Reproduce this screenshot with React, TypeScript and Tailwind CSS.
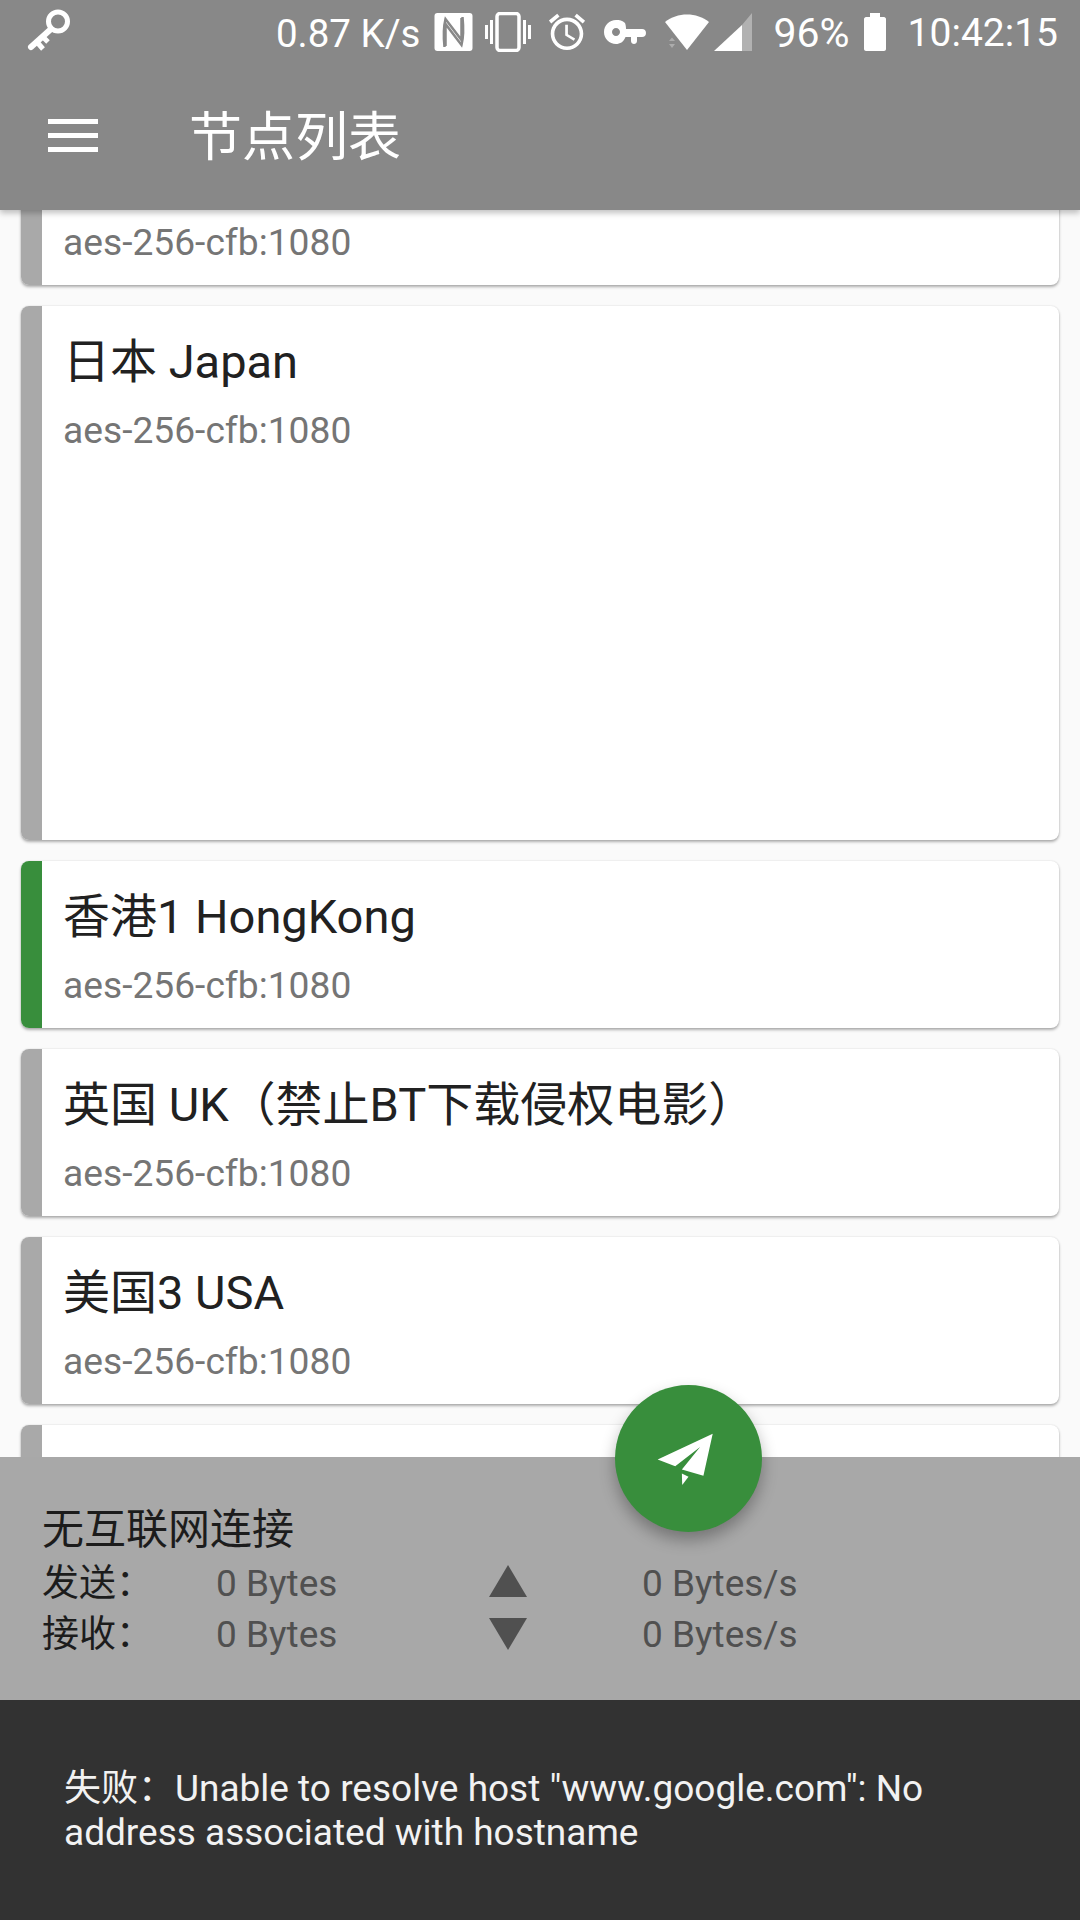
const font = "font-['Roboto','Noto_Sans_CJK_SC',sans-serif]";

function KeyIcon() {
  return (
    <svg width="44" height="46" viewBox="26 9 44 46" fill="none" className="text-white">
      <circle cx="58" cy="21.5" r="9.5" stroke="currentColor" strokeWidth="5" />
      <path d="M51 29 L31 47" stroke="currentColor" strokeWidth="6" strokeLinecap="round" />
      <path d="M37 42 L43 49 M43 37 L48 42" stroke="currentColor" strokeWidth="5" />
    </svg>
  );
}

function NfcIcon() {
  return (
    <svg width="39" height="38" viewBox="0 0 38 38">
      <rect width="38" height="38" rx="3" fill="white" />
      <path d="M10 34 C9 24 9 14 11 6 L27 27 V5" stroke="#888888" strokeWidth="2.5" fill="none" />
      <path d="M28 4 C29 14 29 24 27 32 L11 11 V33" stroke="#888888" strokeWidth="2.5" fill="none" />
    </svg>
  );
}

function VibrateIcon() {
  return (
    <svg width="46" height="40" viewBox="0 0 46 40" fill="white">
      <rect x="0" y="13" width="3" height="14" />
      <rect x="5" y="8" width="3" height="24" />
      <rect x="38" y="8" width="3" height="24" />
      <rect x="43" y="13" width="3" height="14" />
      <rect x="12" y="1.5" width="22" height="37" rx="3" fill="none" stroke="white" strokeWidth="3.5" />
    </svg>
  );
}

function AlarmIcon() {
  return (
    <svg width="38" height="38" viewBox="2 1.5 20 21" fill="white">
      <path d="M22 5.72l-4.6-3.86-1.29 1.53 4.6 3.86L22 5.72zM7.88 3.39L6.6 1.86 2 5.71l1.29 1.53 4.59-3.85zM12.5 8H11v6l4.75 2.85.75-1.23-4-2.37V8zM12 4c-4.97 0-9 4.03-9 9s4.02 9 9 9c4.97 0 9-4.03 9-9s-4.03-9-9-9zm0 16c-3.87 0-7-3.13-7-7s3.13-7 7-7 7 3.13 7 7-3.13 7-7 7z" />
    </svg>
  );
}

function VpnKeyIcon() {
  return (
    <svg width="42" height="24" viewBox="0 0 42 24" fill="white">
      <path d="M21 3 C18.5 0.5 15.5 0 12 0 C5.4 0 0 5.4 0 12 C0 18.6 5.4 24 12 24 C16 24 19.5 22 21.5 17 L27 17 L27 21 C27 23 28.5 24 30 24 C31.5 24 33 23 33 21 L33 17 L38 17 C40.5 17 42 15.5 42 13 C42 10.5 40.5 9 38 9 L22 9 C22 7 21.8 5 21 3 Z M12 8 C14.2 8 16 9.8 16 12 C16 14.2 14.2 16 12 16 C9.8 16 8 14.2 8 12 C8 9.8 9.8 8 12 8 Z" />
    </svg>
  );
}

function WifiIcon() {
  return (
    <svg width="48" height="38" viewBox="0 0 48 38" fill="white">
      <path d="M23 37 L1 9 C13 -1 33 -1 45 9 Z" />
      <path d="M5 28 L8 24.5 L11 28 Z M5 31 L11 31 L8 35 Z" opacity="0.3" />
    </svg>
  );
}

function SignalIcon() {
  return (
    <svg width="38" height="38" viewBox="0 0 38 38">
      <path d="M0 38 L28 12 L28 38 Z" fill="white" />
      <path d="M28 12 L38 0 L38 38 L28 38 Z" fill="white" opacity="0.35" />
    </svg>
  );
}

function BatteryIcon() {
  return (
    <svg width="22" height="38" viewBox="0 0 22 38" fill="white">
      <path d="M6 0 H16 V4 H20 C21 4 22 5 22 6 V36 C22 37 21 38 20 38 H2 C1 38 0 37 0 36 V6 C0 5 1 4 2 4 H6 Z" />
    </svg>
  );
}

function PlaneIcon() {
  return (
    <svg width="63" height="57" viewBox="650 210 190 170" fill="white">
      <path d="M818 220 L652 298 L705 318 L780 260 L725 328 L790 347 Z" />
      <path d="M725 340 L745 350 L726 375 Z" />
    </svg>
  );
}

function ServerCard({ name, sub = true, active, className }: { name?: string; sub?: boolean; active?: boolean; className?: string }) {
  return (
    <div
      className={`mx-[21px] mb-[21px] rounded-[8px] overflow-hidden bg-white flex shadow-[0_0_2px_rgba(0,0,0,0.12),0_2px_3px_rgba(0,0,0,0.3)] ${className ?? "h-[167px]"}`}
    >
      <div className={`w-[21px] shrink-0 ${active ? "bg-[#388e3c]" : "bg-[#a9a9a9]"}`} />
      {sub && (
        <div className="pl-[21px] pt-[26px]">
          <div className="h-[60px] text-[47px] leading-[60px] text-[#212121]">{name}</div>
          <div className="text-[37.2px] leading-[44px] mt-[16px] text-[#757575]">aes-256-cfb:1080</div>
        </div>
      )}
    </div>
  );
}

export default function App() {
  return (
    <div className={`w-[1080px] h-[1920px] relative flex flex-col overflow-hidden bg-[#fafafa] ${font}`}>
      <header className="relative z-10 h-[210px] shrink-0 bg-[#888888] text-white shadow-[0_3px_6px_rgba(0,0,0,0.25)]">
        <div className="h-[63px] flex items-center pl-[26px] pr-[22px]">
          <KeyIcon />
          <div className="ml-auto flex items-center">
            <span className="text-[38.5px] leading-[63px] pt-[3px] mr-[14px]">0.87 K/s</span>
            <NfcIcon />
            <span className="w-[12px]" />
            <VibrateIcon />
            <span className="w-[17px]" />
            <AlarmIcon />
            <span className="w-[18px]" />
            <VpnKeyIcon />
            <span className="w-[18px]" />
            <WifiIcon />
            <span className="w-[2px]" />
            <SignalIcon />
            <span className="text-[41px] leading-[63px] pt-[3px] ml-[21px] mr-[14px]">96%</span>
            <BatteryIcon />
            <span className="text-[39px] leading-[63px] pt-[3px] ml-[22px]">10:42:15</span>
          </div>
        </div>
        <div className="h-[147px] flex items-center pl-[48px]">
          <div className="w-[50px] flex flex-col gap-[9px] -mt-[2px]">
            <div className="h-[5px] bg-white" />
            <div className="h-[5px] bg-white" />
            <div className="h-[5px] bg-white" />
          </div>
          <div className="ml-[91px] text-[53px] leading-[60px] mt-[2px]">节点列表</div>
        </div>
      </header>

      <main className="flex-1 overflow-hidden">
        <div className="-mt-[92px]">
          <ServerCard />
          <ServerCard name="日本 Japan" className="h-[534px]" />
          <ServerCard name="香港1 HongKong" active />
          <ServerCard name="英国 UK（禁止BT下载侵权电影）" />
          <ServerCard name="美国3 USA" />
          <ServerCard sub={false} />
        </div>
      </main>

      <section className="relative z-10 h-[243px] shrink-0 bg-[#a8a8a8] pl-[42px] pt-[48px]">
        <div className="text-[42px] leading-[50px] text-[#1c1c1c]">无互联网连接</div>
        <div className="flex items-center h-[51px] text-[37px] mt-[3px]">
          <span className="w-[174px] text-[#1c1c1c]">发送：</span>
          <span className="w-[273px] text-[#505050]">0 Bytes</span>
          <svg width="38" height="32" viewBox="0 0 38 32" fill="#505050" className="-mt-[5px]"><path d="M19 0 L38 32 L0 32 Z" /></svg>
          <span className="ml-[115px] text-[#505050]">0 Bytes/s</span>
        </div>
        <div className="flex items-center h-[51px] text-[37px]">
          <span className="w-[174px] text-[#1c1c1c]">接收：</span>
          <span className="w-[273px] text-[#505050]">0 Bytes</span>
          <svg width="38" height="32" viewBox="0 0 38 32" fill="#505050" className="-mt-[1px]"><path d="M0 0 L38 0 L19 32 Z" /></svg>
          <span className="ml-[115px] text-[#505050]">0 Bytes/s</span>
        </div>
        <div className="absolute left-[615px] -top-[72px] w-[147px] h-[147px] rounded-full bg-[#388e3c] flex items-center justify-center shadow-[0_8px_16px_rgba(0,0,0,0.3)]">
          <PlaneIcon />
        </div>
      </section>

      <div className="relative z-10 h-[220px] shrink-0 bg-[#323232] pl-[64px] pr-[65px] pt-[2px] flex items-center text-[37px] leading-[44px] text-[#f2f2f2]">
        <p>失败：Unable to resolve host "www.google.com": No address associated with hostname</p>
      </div>
    </div>
  );
}
